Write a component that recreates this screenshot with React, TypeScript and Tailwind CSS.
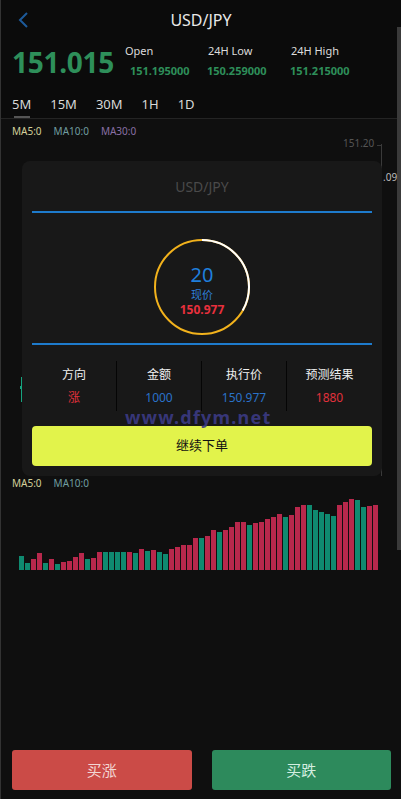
import React from 'react';

const bars: [number, 'G' | 'R'][] = [
  [14, 'G'], [7, 'G'], [11, 'R'], [17, 'R'], [7, 'G'], [11, 'R'], [6, 'G'], [8, 'R'], [9, 'R'], [13, 'R'],
  [17, 'R'], [11, 'G'], [12, 'R'], [18, 'R'], [18, 'G'], [18, 'G'], [18, 'G'], [18, 'G'], [18, 'R'], [17, 'G'],
  [21, 'R'], [19, 'G'], [20, 'R'], [18, 'G'], [16, 'G'], [21, 'R'], [23, 'R'], [25, 'R'], [25, 'R'], [32, 'R'],
  [32, 'G'], [34, 'R'], [40, 'R'], [38, 'G'], [40, 'R'], [43, 'R'], [48, 'R'], [48, 'R'], [45, 'G'], [47, 'R'],
  [48, 'R'], [51, 'R'], [53, 'R'], [56, 'R'], [53, 'G'], [55, 'R'], [63, 'R'], [65, 'R'], [65, 'G'], [60, 'G'],
  [58, 'G'], [56, 'G'], [54, 'G'], [65, 'R'], [68, 'R'], [71, 'R'], [70, 'G'], [63, 'G'], [64, 'R'], [65, 'R'],
];

const tabs = ['5M', '15M', '30M', '1H', '1D'];

function Countdown() {
  // white part = remaining third of the circle, from 12 o'clock clockwise
  const r = 47;
  const c = 2 * Math.PI * r;
  return (
    <svg width="100" height="100" viewBox="0 0 100 100" className="absolute inset-0">
      <circle cx="50" cy="50" r={r} fill="none" stroke="#f2b21c" strokeWidth="2" />
      <circle
        cx="50"
        cy="50"
        r={r}
        fill="none"
        stroke="#ffffff"
        strokeWidth="2"
        strokeDasharray={`${c / 3} ${c}`}
        transform="rotate(-90 50 50)"
      />
    </svg>
  );
}

export default function App() {
  return (
    <div
      className="relative w-[401px] h-[799px] overflow-hidden bg-[#0f0f0f] border-l border-[#333] text-white"
      style={{ fontFamily: '"Noto Sans", "Noto Sans CJK SC", sans-serif' }}
    >
      {/* scrollbar */}
      <div className="absolute right-0 top-[27px] w-[4px] h-[523px] bg-[#3a3a3a]" />

      {/* header */}
      <div className="bg-[#0b0b0b]">
        <div className="relative h-[40px] flex items-center justify-center">
          <svg className="absolute left-[16px] top-[11px]" width="14" height="18" viewBox="0 0 14 18">
            <path d="M10 2 L3 9 L10 16" fill="none" stroke="#1d5a9a" strokeWidth="2" />
          </svg>
          <span className="text-[16px] text-[#e8e8e8]">USD/JPY</span>
        </div>

        <div className="flex items-start pl-[11px] h-[50px]">
          <div className="text-[28px] font-bold text-[#2e8f5a] leading-none mt-[8px] tracking-[-0.3px]">151.015</div>
          <div className="ml-[11px] grid grid-cols-[83px_83px_83px] text-[11px] mt-[4px]">
            <div>
              <div className="text-[#dcdcdc] leading-[14px]">Open</div>
              <div className="text-[#2e8f5a] font-bold ml-[5px] mt-[6px] leading-[14px]">151.195000</div>
            </div>
            <div>
              <div className="text-[#dcdcdc] leading-[14px]">24H Low</div>
              <div className="text-[#2e8f5a] font-bold -ml-[1px] mt-[6px] leading-[14px]">150.259000</div>
            </div>
            <div>
              <div className="text-[#dcdcdc] leading-[14px]">24H High</div>
              <div className="text-[#2e8f5a] font-bold -ml-[1px] mt-[6px] leading-[14px]">151.215000</div>
            </div>
          </div>
        </div>

        <div className="flex pl-[11px] gap-[19px] h-[29px] items-start border-b border-[#242424]">
          {tabs.map((t, i) => (
            <div key={t} className="relative flex flex-col items-center">
              <span className="text-[13px] text-[#d8d8d8] leading-[18px] mt-[5px]">{t}</span>
              {i === 0 && <div className="w-[16px] h-[2px] bg-[#555] mt-[3px]" />}
            </div>
          ))}
        </div>
      </div>

      {/* kline area */}
      <div className="relative h-[357px]">
        <div className="flex gap-[12px] pl-[11px] pt-[5px] text-[10px] leading-[14px]">
          <span className="text-[#d4cf9a]">MA5:0</span>
          <span className="text-[#6f9ea0]">MA10:0</span>
          <span className="text-[#8a6fa6]">MA30:0</span>
        </div>
        {/* price axis */}
        <div className="absolute left-[380px] top-[25px] w-px h-[332px] bg-[#3a3a3a]" />
        <div className="absolute left-[376px] top-[26px] w-[5px] h-px bg-[#3a3a3a]" />
        <span className="absolute left-[342px] top-[17px] text-[10px] text-[#555]">151.20</span>
        <span className="absolute left-[382px] top-[51px] text-[10px] text-[#bbb]">.09</span>
        {/* candle peeking behind the modal */}
        <div className="absolute left-[20px] top-[258px] w-px h-[25px] bg-[#17a37f]" />
        <div className="absolute left-[19px] top-[267px] w-[2px] h-[3px] bg-[#17a37f]" />

        {/* result modal */}
        <div className="absolute left-[21px] top-[42px] w-[360px] h-[315px] rounded-[8px] bg-[#181818] px-[10px] flex flex-col">
          <div className="h-[50px] flex items-center justify-center text-[14px] text-[#4a4a4a]">USD/JPY</div>
          <div className="h-[2px] bg-[#1e7bcc]" />
          <div className="h-[130px] flex items-start justify-center pt-[24px]">
            <div className="relative w-[100px] h-[100px] flex flex-col items-center pt-[28px]">
              <Countdown />
              <span className="text-[20px] text-[#1f7fdc] leading-[20px]">20</span>
              <span className="text-[11px] text-[#2f7fd8] leading-[15px] mt-[2px]">现价</span>
              <span className="text-[12px] font-bold text-[#e8303d] leading-[16px]">150.977</span>
            </div>
          </div>
          <div className="h-[2px] bg-[#1e7bcc]" />
          <div className="relative grid grid-cols-4 mt-[16px] h-[50px]">
            {[
              ['方向', '涨', 'text-[#e0313c]'],
              ['金额', '1000', 'text-[#2a72c8]'],
              ['执行价', '150.977', 'text-[#2a72c8]'],
              ['预测结果', '1880', 'text-[#e0313c]'],
            ].map(([h, v, c], i) => (
              <div
                key={h}
                className={`flex flex-col items-center text-[12px] ${i < 3 ? 'border-r border-[#050505]' : ''}`}
              >
                <span className="text-[#f0f0f0] leading-[16px] mt-[6px]">{h}</span>
                <span className={`${c} leading-[16px] mt-[7px]`}>{v}</span>
              </div>
            ))}
            <span className="absolute left-[93px] top-[47px] text-[18px] font-bold tracking-[1.2px] text-[#3c3b86]/90 leading-[18px]">
              www.dfym.net
            </span>
          </div>
          <button className="mt-[15px] h-[40px] rounded-[4px] bg-[#e2f34b] text-[13px] text-[#111]">继续下单</button>
        </div>
      </div>

      {/* volume */}
      <div className="flex gap-[12px] pl-[11px] text-[10px] leading-[14px]">
        <span className="text-[#d4cf9a]">MA5:0</span>
        <span className="text-[#6f9ea0]">MA10:0</span>
      </div>
      <svg width="401" height="80" viewBox="0 0 401 80" className="block">
        {bars.map(([h, c], i) => (
          <rect
            key={i}
            x={18 + i * 6}
            y={80 - h}
            width="5"
            height={h}
            fill={c === 'G' ? '#0f8a70' : '#b8284c'}
          />
        ))}
      </svg>

      {/* actions */}
      <div className="absolute left-[11px] right-[10px] top-[750px] flex gap-[20px]">
        <button className="flex-1 h-[40px] rounded-[3px] bg-[#cb4b47] text-[15px] text-[#f2d6d4]">买涨</button>
        <button className="flex-1 h-[40px] rounded-[3px] bg-[#2d8a5c] text-[15px] text-[#d4eee0]">买跌</button>
      </div>
    </div>
  );
}
